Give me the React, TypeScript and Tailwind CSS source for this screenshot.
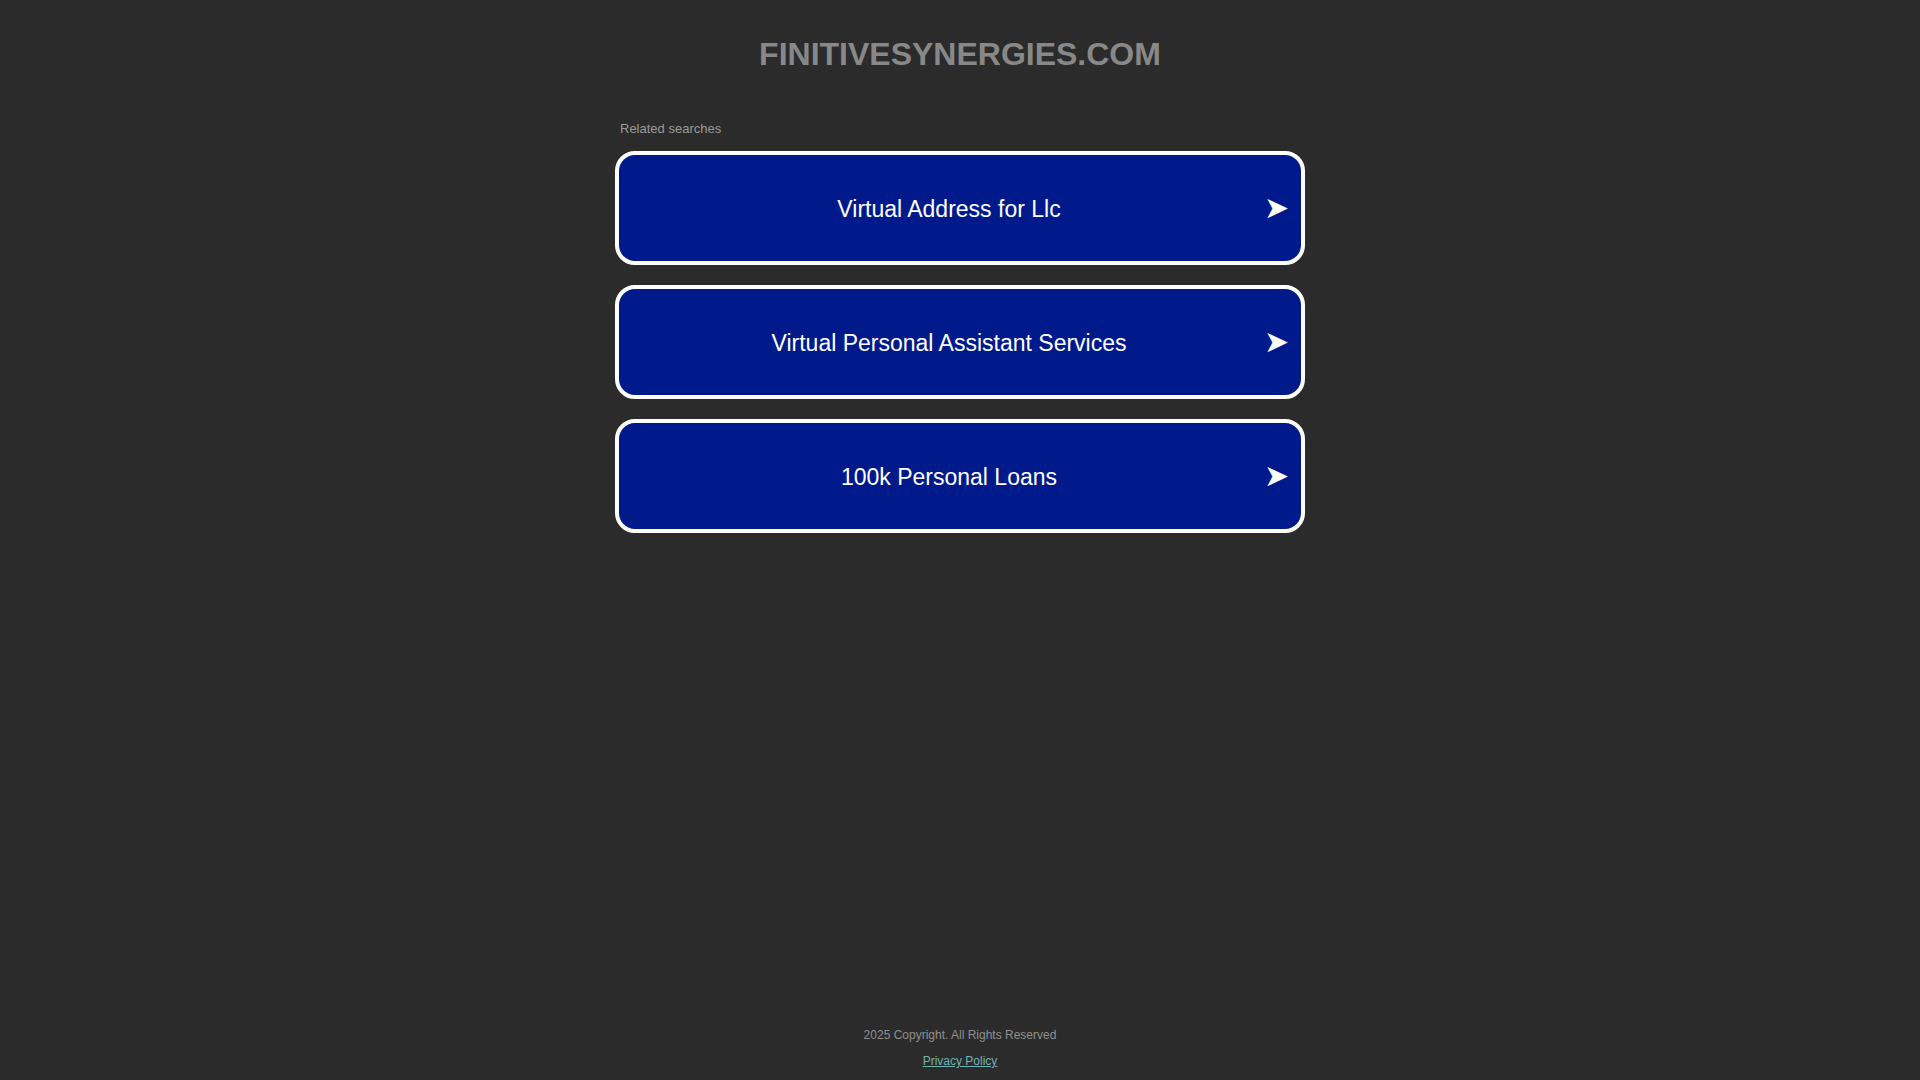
const searches = [
  "Virtual Address for Llc",
  "Virtual Personal Assistant Services",
  "100k Personal Loans",
];

function SearchLink({ label }: { label: string }) {
  return (
    <a
      href="#"
      className="flex h-[114px] items-center rounded-[20px] border-4 border-white bg-[#011a8b] pl-[14px] pr-[12px] text-white no-underline"
    >
      <span className="flex-1 pt-[2px] text-center text-[23px] leading-none">{label}</span>
      <span className="flex w-[24px] justify-end text-[30px] leading-none">➤</span>
    </a>
  );
}

export default function App() {
  return (
    <div className="flex min-h-screen flex-col bg-[#2b2b2b] font-['Liberation_Sans',Arial,sans-serif]">
      <header className="pt-[36px] text-center">
        <h1 className="text-[32px] font-bold leading-[37px] text-[#888888]">
          FINITIVESYNERGIES.COM
        </h1>
      </header>

      <main className="mx-auto mt-[48px] w-[690px]">
        <p className="mb-[15px] pl-[5px] text-[13px] leading-[15px] text-[#9a9a9a]">
          Related searches
        </p>
        <div className="flex flex-col gap-[20px]">
          {searches.map((s) => (
            <SearchLink key={s} label={s} />
          ))}
        </div>
      </main>

      <footer className="mt-auto pb-[12px] text-center text-[12px] leading-[14px]">
        <p className="text-[#8f8f8f]">2025 Copyright. All Rights Reserved</p>
        <a href="#" className="mt-[12px] inline-block text-[#6fb3b3] underline">
          Privacy Policy
        </a>
      </footer>
    </div>
  );
}
